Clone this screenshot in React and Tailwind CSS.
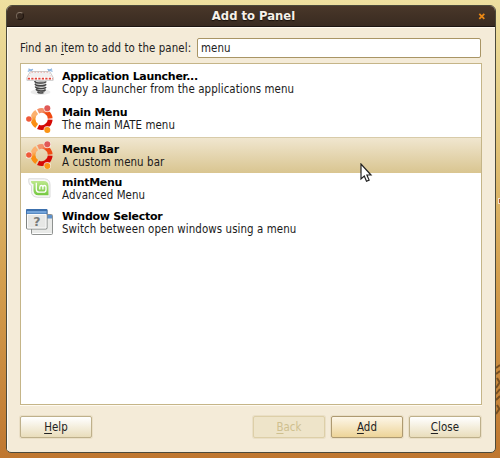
import React from "react";

function LauncherIcon() {
  return (
    <svg width="28" height="28" viewBox="0 0 28 28" fill="none">
      <ellipse cx="14.500" cy="24" rx="10" ry="3" fill="#000" opacity=".08" />
      <path d="M9 12.500l11 1.500M9 15.200l11 1M9.500 17.800l10 1M10 20.400l9.500.8M11 23l8 .5" stroke="#b5b5b5" strokeWidth="1.500" />
      <path d="M8.800 13q0 2 5.500 2t5.700-1.500M9 15.800q.5 2 5.500 2t5.500-1.500M9.300 18.500q.5 2 5.500 2t5-1.500M10 21.200q1 1.800 5 1.800t4.500-1.500M11.500 24q1 1.300 6 .8" stroke="#444" strokeWidth="1.500" />
      <path d="M2.500.8q2 1.800 4.500.5M1.800 3.500q2-1.500 4.500-.8M21.500 1.300q2.500 1.300 4.500-.5M22 2.700q2.500-.7 4.500.8" stroke="#8fb6e0" strokeWidth="1.200" />
      <path d="M4.300 3.500h19.400l3.500 6v2.800H.9V9.500z" fill="#fff" stroke="#c4c4c4" strokeWidth=".9" />
      <path d="M5 4.200h18l2.500 4.900h-23z" fill="#f0f0f0" />
      <path d="M5.500 4.200h17.500" stroke="#e8958e" strokeWidth=".8" strokeDasharray="1.500 1.500" />
      <path d="M4.800 4.500L2.300 9M23.200 4.500l2.500 4.500" stroke="#ecc0bc" strokeWidth=".8" strokeDasharray="1.500 1.500" />
      <path d="M1.800 10.700h25" stroke="#e34239" strokeWidth="1.700" strokeDasharray="2.200 1.300" />
    </svg>
  );
}

function CircleIcon() {
  return (
    <svg width="28" height="28" viewBox="0 0 28 28" fill="none">
      <defs>
        <linearGradient id="ringTop" gradientUnits="userSpaceOnUse" x1="13" y1="5" x2="23" y2="12">
          <stop offset=".3" stopColor="#f39168" />
          <stop offset=".65" stopColor="#f04a12" />
        </linearGradient>
        <linearGradient id="ringLeft" gradientUnits="userSpaceOnUse" x1="8" y1="7" x2="10" y2="20">
          <stop offset=".3" stopColor="#fbb06e" />
          <stop offset=".65" stopColor="#fa8e12" />
        </linearGradient>
      </defs>
      <path d="M12.100 6.300A8.500 8.500 0 0 1 24.200 13.500" stroke="url(#ringTop)" strokeWidth="4.800" />
      <path d="M24.200 14.700A8.500 8.500 0 0 1 12.100 21.800" stroke="#d50a05" strokeWidth="4.800" />
      <path d="M10.700 21A8.500 8.500 0 0 1 10.700 7" stroke="url(#ringLeft)" strokeWidth="4.800" />
      <circle cx="21.300" cy="3.500" r="3.700" fill="#fff" fillOpacity=".75" />
      <circle cx="2.800" cy="14" r="3.500" fill="#fff" fillOpacity=".75" />
      <circle cx="21.300" cy="24.800" r="3.700" fill="#fff" fillOpacity=".75" />
      <circle cx="21.300" cy="3.300" r="3" fill="#e05a58" />
      <circle cx="2.900" cy="14" r="2.800" fill="#ef5a3a" />
      <circle cx="21.300" cy="24.900" r="3" fill="#fa9516" />
    </svg>
  );
}

function MintIcon() {
  return (
    <svg width="24" height="21" viewBox="0 0 24 21" fill="none">
      <defs>
        <linearGradient id="mint" x1="0" y1="0" x2="0" y2="1">
          <stop stopColor="#bde88c" />
          <stop offset="1" stopColor="#74c840" />
        </linearGradient>
      </defs>
      <path d="M.8.800h15.700q5.500.5 5.500 6v12.500H9.500q-6-.5-6-6V7.500Q.8 7 .8 4z" fill="#f8f8f8" stroke="#d6d6d6" strokeWidth=".9" />
      <path d="M3 3h12.500q5 0 5 5v9.300H10.500q-5 0-5-5V6Q3 6 3 3z" fill="url(#mint)" />
      <path d="M8.300 4.800v6.400q0 3 3 3h4.200q2.500 0 2.500-2.500V9.200q0-1.700-1.500-1.700t-1.600 1.700v2.400M14.900 9.200q0-1.700-1.500-1.700t-1.600 1.700v2.400" stroke="#fff" strokeWidth="1.300" />
    </svg>
  );
}

function WindowsIcon() {
  return (
    <svg width="28" height="27" viewBox="0 0 28 27" fill="none">
      <rect x="5.500" y="5.500" width="21" height="20" rx="1" fill="#e9eae8" stroke="#8f9290" />
      <path d="M6 6h20v3.500H6z" fill="#5f92cb" />
      <path d="M6.500 24.500h19" stroke="#fff" />
      <rect x=".5" y=".5" width="20.500" height="19.500" rx="1" fill="#e6e7e5" stroke="#7f8381" />
      <path d="M0 1q0-1 1-1h19.500q1 0 1 1v4H0z" fill="#3c70ad" />
      <path d="M1 2h19.500v2.500H1z" fill="#75a5da" />
      <path d="M1.500 5.500h18.500v13.500h-18.500z" stroke="#fafafa" />
      <text x="11" y="16.500" textAnchor="middle" fontSize="12.500" fontWeight="bold" fontFamily="DejaVu Sans, sans-serif" fill="#777b7b">?</text>
    </svg>
  );
}

function Row({ icon, title, text, className, iconClass = "" }) {
  return (
    <div className={"flex shrink-0 pl-[5px] " + className}>
      <div className={"flex w-[36px] shrink-0 " + iconClass}>{icon}</div>
      <div className="whitespace-nowrap leading-[13px] text-[#1a1a1a]">
        <div className="font-['DejaVu_Sans',sans-serif] text-[11px] font-bold tracking-[-0.280px] text-black">{title}</div>
        <div>{text}</div>
      </div>
    </div>
  );
}

function Button({ label, className }) {
  return (
    <button className={"flex h-[22px] w-[72px] items-center justify-center rounded-[2px] border pt-px shadow-[0_0_0_1px_#eadfc6] " + className}>
      <span>
        <span className="underline decoration-1 underline-offset-2">{label[0]}</span>
        {label.slice(1)}
      </span>
    </button>
  );
}

export default function App() {
  return (
    <div className="relative h-[458px] w-[500px] overflow-hidden bg-[linear-gradient(180deg,#eee0a0_0%,#e2c77d_28%,#d4a04f_60%,#bf7730_100%)] px-[6px] pt-[5px] font-['DejaVu_Sans_Condensed','DejaVu_Sans',sans-serif] text-[11.400px] tracking-[0.090px] text-[#222]">
      <svg className="absolute top-[360px] left-[494px]" width="6" height="60" fill="none">
        <path d="M2 8l4-3M2 14l4-3M3 18l3 5M2 28l4-6M2 34l4-5M2 40l4-4M3 45l3 5M2 54l4-6" stroke="#785022" strokeWidth="2" />
      </svg>
      <div className="absolute top-[198px] left-[498px] h-[6px] w-[3px] border border-[#f1e5ce] bg-[#b85a31]" />
      <div className="relative flex h-[448px] w-[490px] flex-col overflow-hidden rounded-t-[6px] rounded-b-[5px] border border-[#4c4a3b] bg-[#f4ebd8]">
        <div className="flex h-[21px] shrink-0 items-center border-b border-[#1d1612] bg-linear-to-b from-[#493729] to-[#392b21] px-[9px]">
          <div className="size-[8px] rounded-full border border-[#211710] border-t-[#8b7b6c] border-l-[#78685a] bg-[#382a20]" />
          <div className="ml-[5px] flex-1 pt-[2px] text-center font-['DejaVu_Sans',sans-serif] text-[11.600px] font-bold tracking-normal text-[#f6f1e9] [text-shadow:0_1px_1px_#17100b]">Add to Panel</div>
          <svg width="8" height="8" viewBox="0 0 8 8" fill="none">
            <path d="M1.300 1.800l5 5M6.300 1.800l-5 5" stroke="#e98714" strokeWidth="1.800" />
          </svg>
        </div>
        <div className="flex flex-1 flex-col border-t border-l border-[#fffaf0] pt-[10px] pr-[13px] pl-[12px]">
          <div className="mr-px flex h-[20px] shrink-0 items-center">
            <label className="w-[177px] pt-px whitespace-nowrap">
              Find an <span className="underline decoration-1 underline-offset-2">i</span>tem to add to the panel:
            </label>
            <div className="flex h-[20px] flex-1 items-center rounded-[2px] border border-[#a99565] bg-white pt-px pl-[3px]">menu</div>
          </div>
          <div className="mt-[5px] flex h-[342px] shrink-0 flex-col border border-[#c5b588] bg-white shadow-[0_1px_0_#fffaf0]">
            <Row className="h-[36px] pt-[6px]" icon={<LauncherIcon />} iconClass="-mt-[2px]" title="Application Launcher..." text="Copy a launcher from the applications menu" />
            <Row className="h-[37px] pt-[6px]" icon={<CircleIcon />} iconClass="-mt-[1px]" title="Main Menu" text="The main MATE menu" />
            <Row className="h-[36px] border-t border-[#d8cba9] bg-linear-to-b from-[#f0e6cf] to-[#d9c590] pt-[5px]" icon={<CircleIcon />} iconClass="-mt-[2px]" title="Menu Bar" text="A custom menu bar" />
            <Row className="h-[33px] pt-[3px]" icon={<MintIcon />} iconClass="pl-[2px] pt-[2px]" title="mintMenu" text="Advanced Menu" />
            <Row className="h-[34px] pt-[4px]" icon={<WindowsIcon />} iconClass="-mt-[1px]" title="Window Selector" text="Switch between open windows using a menu" />
          </div>
          <div className="mt-[11px] mr-px flex items-center gap-[6px]">
            <Button label="Help" className="mr-auto border-[#beb08b] bg-linear-to-b from-white to-[#e9ddbb]" />
            <Button label="Back" className="border-[#ddcfa8] bg-[#eee4c9] text-[#cfc08f]" />
            <Button label="Add" className="border-[#ae9a71] bg-linear-to-b from-[#fdf6e7] to-[#edd498]" />
            <Button label="Close" className="border-[#beb08b] bg-linear-to-b from-white to-[#e9ddbb]" />
          </div>
        </div>
      </div>
      <svg className="absolute top-[163px] left-[360px]" width="13" height="20" viewBox="0 0 13 20">
        <path d="M1 1v15l3.300-3 2.200 5.200 2.600-1.100L6.900 12H11z" fill="white" stroke="#222" strokeWidth="1.200" />
      </svg>
    </div>
  );
}
